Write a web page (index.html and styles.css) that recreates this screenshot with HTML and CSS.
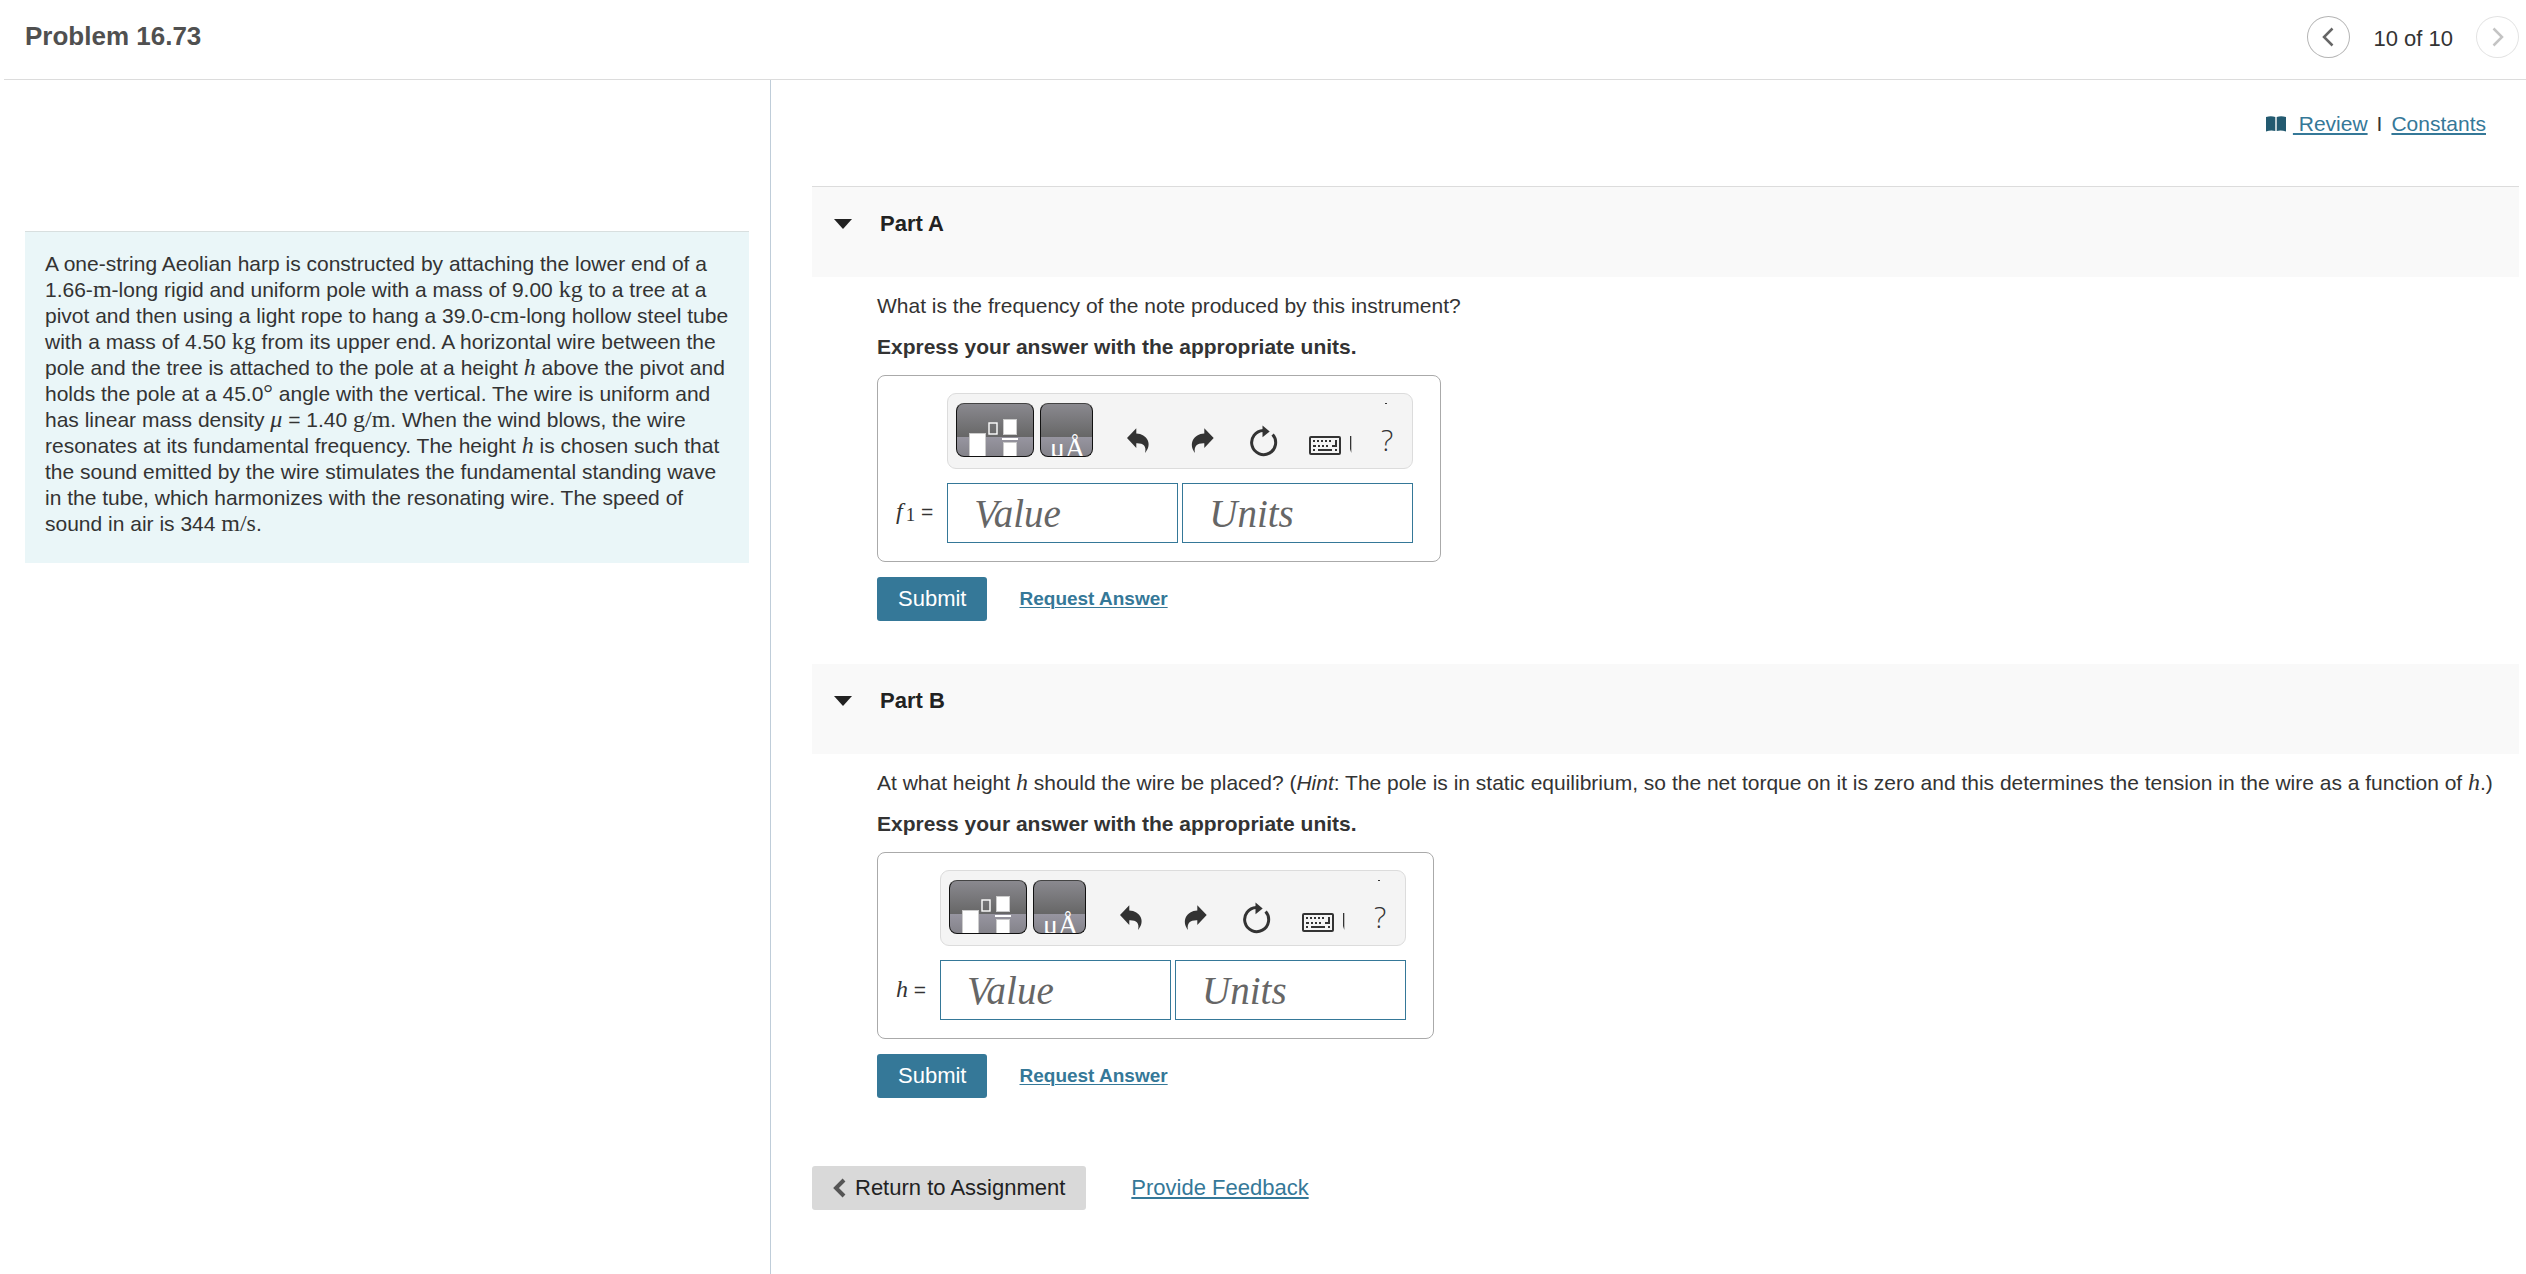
FILE: index.html
```
<!DOCTYPE html>
<html lang="en">
  <head>
    <meta charset="UTF-8" />
    <meta name="viewport" content="width=device-width, initial-scale=1.0" />
    <title>Problem 16.73</title>
    <link rel="stylesheet" href="styles.css">
  </head>
  <body>
    <header class="header">
      <h1>Problem 16.73</h1>
      <nav class="pager" aria-label="Problems">
        <button class="pager-btn" type="button" aria-label="Previous item">
          <svg width="41" height="40" viewBox="0 0 41 40"><path d="M24.5 11.5 L16 20 L24.5 28.5" /></svg>
        </button>
        <span class="pager-text">10 of 10</span>
        <button class="pager-btn" type="button" aria-label="Next item" disabled>
          <svg width="41" height="40" viewBox="0 0 41 40"><path d="M16.5 11.5 L25 20 L16.5 28.5" /></svg>
        </button>
      </nav>
    </header>

    <main class="main">
      <section class="left">
        <div class="problem">
          A one-string Aeolian harp is constructed by attaching the lower end of a
          1.66-<span class="unit">m</span>-long rigid and uniform pole with a mass of 9.00 <span class="unit">kg</span> to a tree at a
          pivot and then using a light rope to hang a 39.0-<span class="unit">cm</span>-long hollow steel tube
          with a mass of 4.50 <span class="unit">kg</span> from its upper end. A horizontal wire between the
          pole and the tree is attached to the pole at a height <i class="var">h</i> above the pivot and
          holds the pole at a 45.0<span class="unit">°</span> angle with the vertical. The wire is uniform and
          has linear mass density <i class="var">μ</i> = 1.40 <span class="unit">g/m</span>. When the wind blows, the wire
          resonates at its fundamental frequency. The height <i class="var">h</i> is chosen such that
          the sound emitted by the wire stimulates the fundamental standing wave
          in the tube, which harmonizes with the resonating wire. The speed of
          sound in air is 344 <span class="unit">m/s</span>.
        </div>
      </section>

      <section class="right">
        <div class="links">
          <svg class="book" width="20" height="16" viewBox="0 0 20 16">
            <path d="M0 1 Q5 -0.6 9.3 1 V15 Q5 13.8 0 15.4 Z M10.7 1 Q15 -0.6 20 1 V15.4 Q15 13.8 10.7 15 Z" />
          </svg>
          <a class="review" href="#">&nbsp;Review</a>
          <span>I</span>
          <a href="#">Constants</a>
        </div>

        <article class="part">
          <h2 class="part-head part-first"><span class="caret"></span>Part A</h2>
          <div class="part-body">
            <p>What is the frequency of the note produced by this instrument?</p>
            <p><b>Express your answer with the appropriate units.</b></p>
            <div class="answer">
              <div class="toolbar">
                <button class="tool-dark" type="button" aria-label="Templates">
                  <svg width="76" height="52" viewBox="1 1 76 52">
                    <g fill="#fff" stroke="#ccc">
                      <rect x="13.5" y="30.5" width="16" height="26" />
                      <rect x="47.5" y="16.5" width="13" height="15" />
                      <rect x="47.5" y="39.5" width="13" height="16" />
                    </g>
                    <rect x="46" y="35" width="16" height="2" fill="#fff" />
                    <rect x="33" y="20" width="8" height="11" fill="none" stroke="#fff" stroke-width="1.4" />
                  </svg>
                </button>
                <button class="tool-dark" type="button" aria-label="Symbols">
                  <svg width="51" height="52" viewBox="1 1 51 52"><text class="symbols" x="10" y="54">μÅ</text></svg>
                </button>
                <span class="tools">
                  <button type="button" aria-label="Undo">
                    <svg width="64" height="54"><path d="M21 35 L30.3 25.3 V30.5 C41 31 47 41 39 50 C41 43 37 40 30.3 40.3 V45 Z" /></svg>
                  </button>
                  <button type="button" aria-label="Redo">
                    <svg width="64" height="54"><path d="M43.7 35 L34.3 25.3 V30.5 C23.5 31 18 41 25 50 C23.5 43 27.5 40 34.3 40.3 V45 Z" /></svg>
                  </button>
                  <button type="button" aria-label="Reset">
                    <svg width="64" height="54">
                      <path d="M38.6 31.6 A12 12 0 1 1 29.3 27.6" fill="none" stroke="#333" stroke-width="3" />
                      <path d="M28.5 22.5 L35.7 28.4 L28.5 34.3 Z" />
                    </svg>
                  </button>
                  <button type="button" aria-label="Keyboard shortcuts">
                    <svg width="64" height="54">
                      <rect x="12" y="34" width="30" height="17" rx="1" fill="none" stroke="#333" stroke-width="2" />
                      <path d="M15 37h2v2h-2z M19 37h2v2h-2z M23 37h2v2h-2z M27 37h2v2h-2z M31 37h2v2h-2z M37 37h2v7h-5v-2h3z M15 42h3v2h-3z M20 42h2v2h-2z M24 42h2v2h-2z M28 42h2v2h-2z M15 46h2v2h-2z M20 46h14v2h-14z M37 46h2v2h-2z" />
                      <path d="M52 33 V46 L53.3 50 V33 Z" />
                    </svg>
                  </button>
                  <button class="help" type="button" aria-label="Help">
                    <svg width="50" height="54">
                      <rect x="23" y="0" width="2" height="1" />
                      <text class="help-mark" x="25" y="48">?</text>
                    </svg>
                  </button>
                </span>
              </div>
              <label class="name" for="valueA"><i class="var">f</i><small>1</small> =</label>
              <div class="fields">
                <input id="valueA" type="text" placeholder="Value" />
                <input type="text" placeholder="Units" aria-label="Units" />
              </div>
            </div>
            <div class="actions">
              <button class="submit" type="button">Submit</button>
              <a href="#">Request Answer</a>
            </div>
          </div>
        </article>

        <article class="part">
          <h2 class="part-head"><span class="caret"></span>Part B</h2>
          <div class="part-body">
            <p>At what height <i class="var">h</i> should the wire be placed? (<i>Hint</i>: The pole is in static equilibrium, so the net torque on it is zero and this determines the tension in the wire as a function of <i class="var">h</i>.)</p>
            <p><b>Express your answer with the appropriate units.</b></p>
            <div class="answer">
              <div class="toolbar">
                <button class="tool-dark" type="button" aria-label="Templates">
                  <svg width="76" height="52" viewBox="1 1 76 52">
                    <g fill="#fff" stroke="#ccc">
                      <rect x="13.5" y="30.5" width="16" height="26" />
                      <rect x="47.5" y="16.5" width="13" height="15" />
                      <rect x="47.5" y="39.5" width="13" height="16" />
                    </g>
                    <rect x="46" y="35" width="16" height="2" fill="#fff" />
                    <rect x="33" y="20" width="8" height="11" fill="none" stroke="#fff" stroke-width="1.4" />
                  </svg>
                </button>
                <button class="tool-dark" type="button" aria-label="Symbols">
                  <svg width="51" height="52" viewBox="1 1 51 52"><text class="symbols" x="10" y="54">μÅ</text></svg>
                </button>
                <span class="tools">
                  <button type="button" aria-label="Undo">
                    <svg width="64" height="54"><path d="M21 35 L30.3 25.3 V30.5 C41 31 47 41 39 50 C41 43 37 40 30.3 40.3 V45 Z" /></svg>
                  </button>
                  <button type="button" aria-label="Redo">
                    <svg width="64" height="54"><path d="M43.7 35 L34.3 25.3 V30.5 C23.5 31 18 41 25 50 C23.5 43 27.5 40 34.3 40.3 V45 Z" /></svg>
                  </button>
                  <button type="button" aria-label="Reset">
                    <svg width="64" height="54">
                      <path d="M38.6 31.6 A12 12 0 1 1 29.3 27.6" fill="none" stroke="#333" stroke-width="3" />
                      <path d="M28.5 22.5 L35.7 28.4 L28.5 34.3 Z" />
                    </svg>
                  </button>
                  <button type="button" aria-label="Keyboard shortcuts">
                    <svg width="64" height="54">
                      <rect x="12" y="34" width="30" height="17" rx="1" fill="none" stroke="#333" stroke-width="2" />
                      <path d="M15 37h2v2h-2z M19 37h2v2h-2z M23 37h2v2h-2z M27 37h2v2h-2z M31 37h2v2h-2z M37 37h2v7h-5v-2h3z M15 42h3v2h-3z M20 42h2v2h-2z M24 42h2v2h-2z M28 42h2v2h-2z M15 46h2v2h-2z M20 46h14v2h-14z M37 46h2v2h-2z" />
                      <path d="M52 33 V46 L53.3 50 V33 Z" />
                    </svg>
                  </button>
                  <button class="help" type="button" aria-label="Help">
                    <svg width="50" height="54">
                      <rect x="23" y="0" width="2" height="1" />
                      <text class="help-mark" x="25" y="48">?</text>
                    </svg>
                  </button>
                </span>
              </div>
              <label class="name" for="valueB"><i class="var">h</i> =</label>
              <div class="fields">
                <input id="valueB" type="text" placeholder="Value" />
                <input type="text" placeholder="Units" aria-label="Units" />
              </div>
            </div>
            <div class="actions">
              <button class="submit" type="button">Submit</button>
              <a href="#">Request Answer</a>
            </div>
          </div>
        </article>

        <footer class="footer">
          <button class="return" type="button">
            <svg width="14" height="20" viewBox="0 0 14 20"><path d="M11 2 L3 10 L11 18" /></svg>
            Return to Assignment
          </button>
          <a href="#">Provide Feedback</a>
        </footer>
      </section>
    </main>
  </body>
</html>
```
FILE: styles.css
```
* {
  box-sizing: border-box;
}

body {
  margin: 0;
  min-height: 100vh;
  display: flex;
  flex-direction: column;
  background-color: #fff;
  color: #333;
  font-family: "Liberation Sans", Arial, Helvetica, sans-serif;
  font-size: 21px;
  line-height: 26px;
}

h1,
h2,
p {
  margin: 0;
}

button {
  font-family: inherit;
  cursor: pointer;
}

svg {
  display: block;
}

a {
  color: #357898;
  text-decoration-thickness: 2px;
  text-underline-offset: 2px;
}

/* header */
.header {
  display: flex;
  align-items: center;
  justify-content: space-between;
  height: 80px;
  margin-left: 4px;
  padding: 0 7px 6px 21px;
  border-bottom: 1px solid #dcdcdc;
}

.header h1 {
  padding-bottom: 2px;
  font-size: 26px;
  color: #505050;
}

.pager {
  display: flex;
  align-items: center;
  gap: 23px;
}

.pager-text {
  padding-top: 4px;
  font-size: 22px;
}

.pager-btn {
  padding: 0;
  border: 1px solid #b5b5b5;
  border-radius: 50%;
  background-color: #fff;
}

.pager-btn path {
  fill: none;
  stroke: #666;
  stroke-width: 2.5;
}

.pager-btn:disabled {
  border-color: #e3e3e3;
}

.pager-btn:disabled path {
  stroke: #c4c4c4;
}

/* columns */
.main {
  flex: 1;
  display: flex;
}

.left {
  width: 771px;
  flex-shrink: 0;
  padding: 151px 21px 0 25px;
  border-right: 1px solid #bfcdd9;
}

.right {
  flex: 1;
  padding: 31px 7px 40px 41px;
}

.problem {
  padding: 19px 14px 26px 20px;
  border-top: 1px solid #d8dfdf;
  background-color: #eaf6f8;
}

.unit,
.var {
  font-family: "Liberation Serif", "Times New Roman", serif;
  font-size: 24px;
  line-height: 0;
}

.links {
  display: flex;
  justify-content: flex-end;
  align-items: center;
  padding-right: 33px;
  margin-bottom: 49px;
}

.links span {
  margin: 0 9px;
}

.book {
  margin-right: 7px;
  fill: #235a70;
}

/* parts */
.part {
  margin-bottom: 43px;
}

.part-head {
  display: flex;
  align-items: center;
  height: 90px;
  padding: 0 22px 16px;
  background-color: #f9f9f9;
  color: #222;
  font-size: 22px;
}

.part-first {
  height: 91px;
  border-top: 1px solid #dcdcdc;
}

.caret {
  margin-right: 28px;
  border: 9px solid transparent;
  border-top: 10px solid #222;
  border-bottom: 0;
}

.part-body {
  display: flex;
  flex-direction: column;
  align-items: flex-start;
  gap: 15px;
  padding: 16px 0 0 65px;
}

.answer {
  display: grid;
  grid-template-columns: auto auto;
  align-items: center;
  gap: 14px;
  padding: 17px 27px 18px 18px;
  border: 1px solid #aaa;
  border-radius: 8px;
}

.toolbar {
  grid-column: 2;
  display: flex;
  gap: 6px;
  padding: 9px 0 11px 8px;
  border: 1px solid #dcdcdc;
  border-radius: 9px;
  background-color: #f4f4f4;
}

.tools {
  display: flex;
  margin-left: 7px;
}

.tools button {
  padding: 0;
  border: 0;
  background: none;
  fill: #333;
}

.tool-dark {
  padding: 0;
  border: 1px solid #111;
  border-top-color: #444;
  border-radius: 8px;
  overflow: hidden;
  background: linear-gradient(#8a898f, #666 64%, #9795a0 64%, #84838a);
}

.symbols {
  fill: #fff;
  font-family: "Liberation Serif", serif;
  font-size: 28px;
}

.help svg {
  overflow: visible;
}

.help-mark {
  font-family: "Open Sans", sans-serif;
  font-size: 29px;
  font-weight: 300;
  text-anchor: middle;
}

.name {
  font-size: 21px;
  white-space: nowrap;
}

.name small {
  margin-left: 3px;
  font-family: "Liberation Serif", serif;
  font-size: 19px;
  vertical-align: -2px;
}

.fields {
  display: flex;
  gap: 4px;
}

.fields input {
  width: 231px;
  height: 60px;
  padding: 0 26px;
  border: 1px solid #357898;
  border-radius: 0;
  color: #333;
  font-family: "Liberation Serif", serif;
  font-size: 39px;
}

.fields input::placeholder {
  color: #666;
  font-style: italic;
}

.actions {
  display: flex;
  align-items: center;
  gap: 32px;
}

.actions a {
  font-size: 19px;
  font-weight: bold;
  text-decoration-thickness: 1px;
}

.submit {
  height: 44px;
  padding: 0 21px;
  border: 0;
  border-radius: 3px;
  background-color: #357898;
  color: #fff;
  font-size: 22px;
}

.footer {
  display: flex;
  align-items: center;
  gap: 45px;
  padding-top: 25px;
  font-size: 22px;
}

.return {
  display: flex;
  align-items: center;
  gap: 8px;
  height: 44px;
  padding: 0 21px;
  border: 0;
  border-radius: 3px;
  background-color: #d9d9d9;
  color: #222;
  font-size: 22px;
}

.return path {
  fill: none;
  stroke: #555;
  stroke-width: 4;
}
```
